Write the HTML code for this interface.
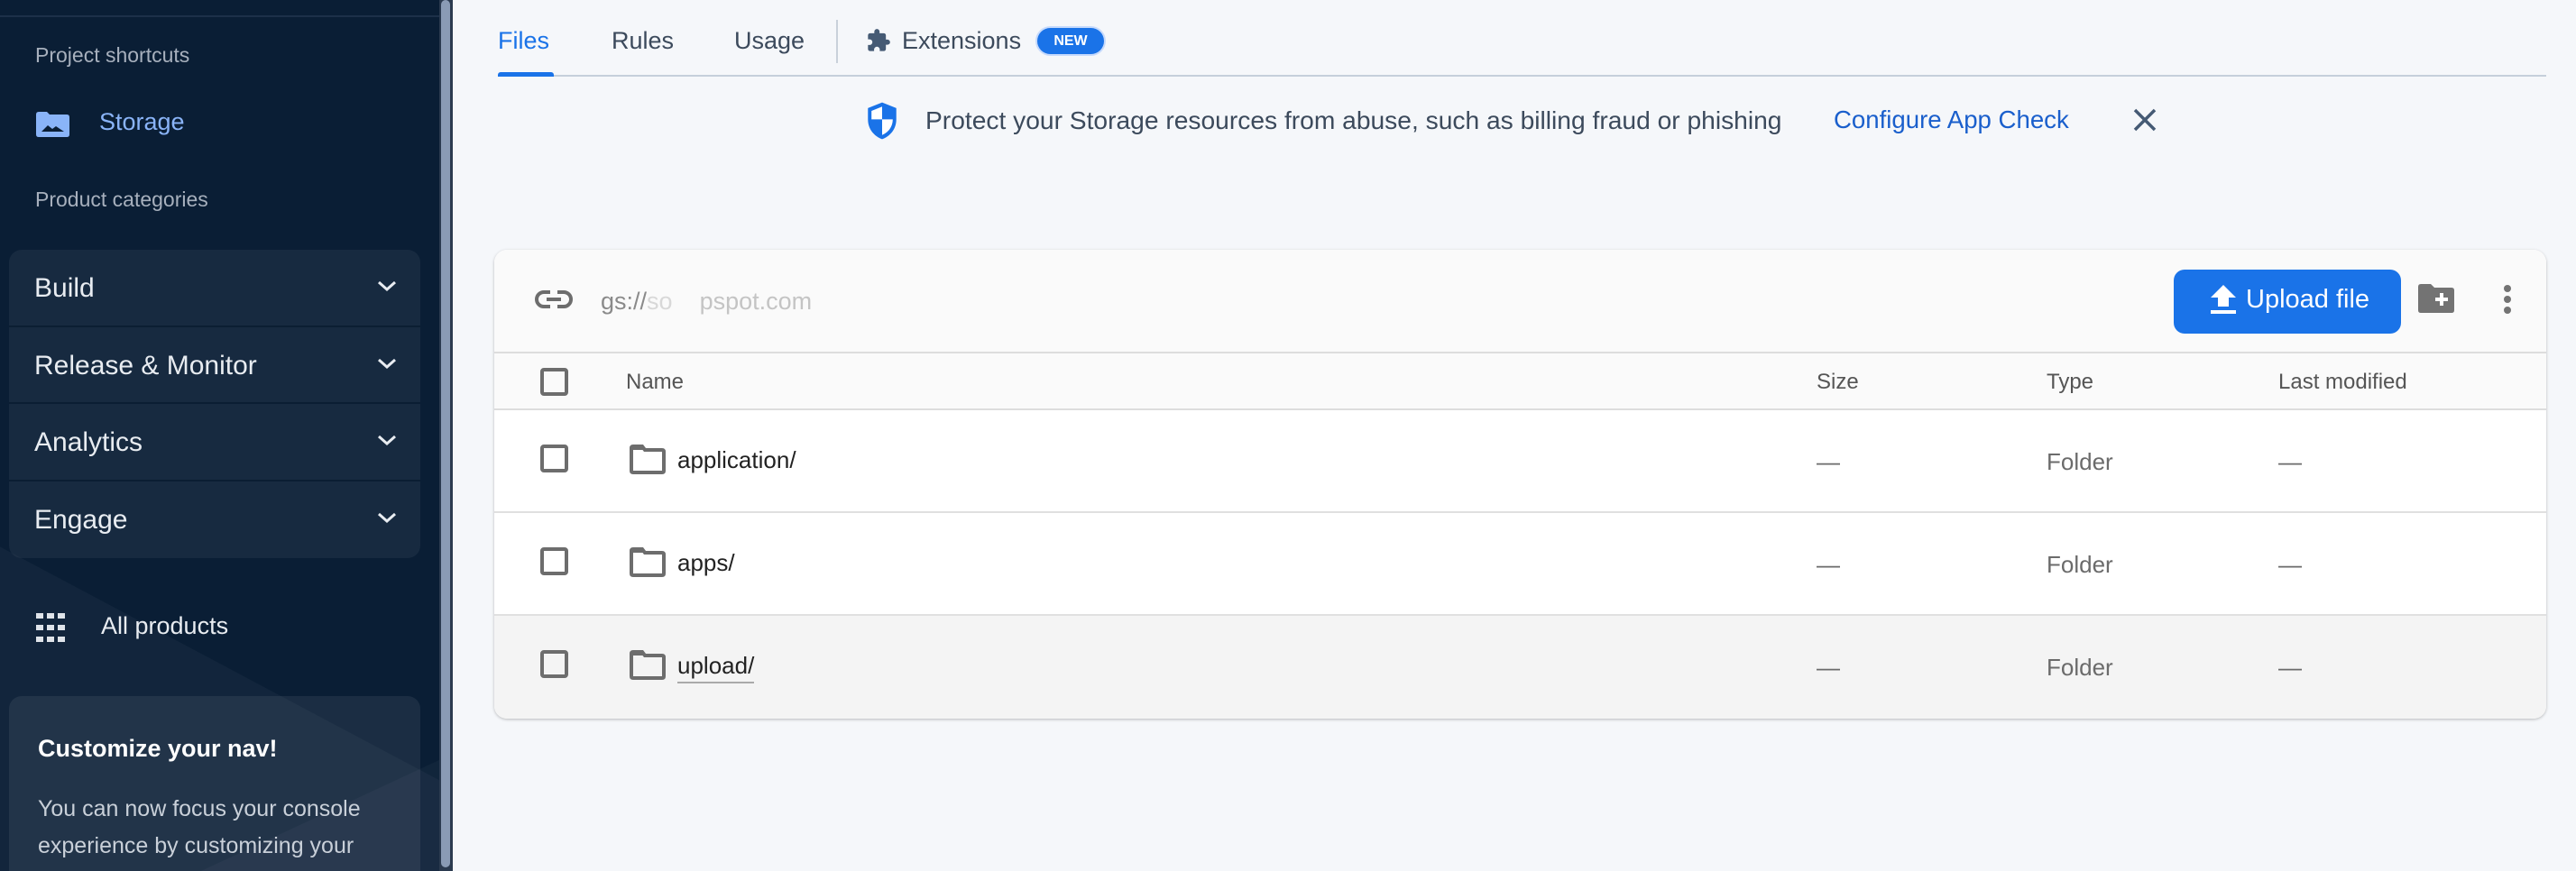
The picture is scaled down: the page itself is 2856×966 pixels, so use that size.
<!DOCTYPE html>
<html><head><meta charset="utf-8"><style>
*{margin:0;padding:0;box-sizing:border-box}
html,body{width:2856px;height:966px;overflow:hidden}
body{background:#f5f7fa;font-family:"Liberation Sans",Arial,sans-serif;position:relative}
.sb{position:absolute;left:0;top:0;width:487px;height:966px;background:#0a1e35;overflow:hidden}
.sb .shape1{position:absolute;left:-200px;top:500px;width:1400px;height:600px;background:rgba(255,255,255,0.035);transform:rotate(28deg);transform-origin:0 0}
.sb .shape2{position:absolute;left:150px;top:1000px;width:800px;height:800px;background:rgba(255,255,255,0.03);transform:rotate(-25deg);transform-origin:0 0}
.scroll{position:absolute;left:487px;top:0;width:15px;height:966px;background:#2b3a4f}
.scroll i{position:absolute;left:2px;top:0;width:10px;height:962px;background:#8a9bb5;border-radius:5px}
.t{position:absolute;white-space:nowrap}
.acc{position:absolute;left:10px;top:277px;width:456px;height:342px;border-radius:14px;background:rgba(255,255,255,0.055);overflow:hidden}
.acc div{height:85.5px;border-bottom:2px solid #0b1e33;position:relative;color:#e8ecf1;font-size:30px;padding-left:28px;line-height:85px}
.acc div:last-child{border-bottom:none}
.acc svg{position:absolute;right:26px;top:34px}
.card2{position:absolute;left:10px;top:772px;width:456px;height:194px;border-radius:14px 14px 0 0;background:rgba(255,255,255,0.07)}
.card{position:absolute;left:548px;top:277px;width:2275px;height:520px;border-radius:14px;background:#fff;box-shadow:0 1px 3px rgba(0,0,0,.25);overflow:hidden}
.hd{position:absolute;left:0;top:0;width:100%;height:115px;background:#fafafa;border-bottom:2px solid #ddd}
.th{position:absolute;left:0;top:115px;width:100%;height:63px;background:#fafafa;border-bottom:2px solid #ddd}
.row{position:absolute;left:0;width:100%;height:114px;border-bottom:2px solid #e0e0e0}
.cb{position:absolute;left:51px;width:31px;height:31px;border:4px solid #6d6d6d;border-radius:4px}
.gray{color:#555;font-size:24px}
.cell{position:absolute;top:42px;font-size:26px;color:#6b6b6b}
</style></head><body>
<div class="sb"><div class="shape1"></div><div class="shape2"></div>
<div style="position:absolute;left:0;top:17px;width:487px;height:2px;background:#1d3049"></div>
<div class="t" style="left:39px;top:48px;font-size:23px;color:#a7b0bd">Project shortcuts</div>
<svg style="position:absolute;left:40px;top:124px" width="37" height="28" viewBox="0 0 37 28"><path d="M0 3Q0 0 3 0H12L15 3H34Q37 3 37 6V25Q37 28 34 28H3Q0 28 0 25Z" fill="#8ab4f8"/><path d="M6 22L13 15L18 19L22 16L31 22Z" fill="#0a1e35"/></svg>
<div class="t" style="left:110px;top:120px;font-size:27px;color:#8ab4f8">Storage</div>
<div class="t" style="left:39px;top:208px;font-size:23px;color:#a7b0bd">Product categories</div>
<div class="acc">
<div>Build<svg width="22" height="12" viewBox="0 0 22 12"><path d="M2 2L11 10L20 2" stroke="#e8ecf1" stroke-width="3" fill="none"/></svg></div>
<div>Release &amp; Monitor<svg width="22" height="12" viewBox="0 0 22 12"><path d="M2 2L11 10L20 2" stroke="#e8ecf1" stroke-width="3" fill="none"/></svg></div>
<div>Analytics<svg width="22" height="12" viewBox="0 0 22 12"><path d="M2 2L11 10L20 2" stroke="#e8ecf1" stroke-width="3" fill="none"/></svg></div>
<div>Engage<svg width="22" height="12" viewBox="0 0 22 12"><path d="M2 2L11 10L20 2" stroke="#e8ecf1" stroke-width="3" fill="none"/></svg></div>
</div>
<svg style="position:absolute;left:40px;top:680px" width="32" height="32" viewBox="0 0 32 32" fill="#dfe4ea"><rect x="0" y="0" width="8" height="6"/><rect x="12" y="0" width="8" height="6"/><rect x="24" y="0" width="8" height="6"/><rect x="0" y="13" width="8" height="6"/><rect x="12" y="13" width="8" height="6"/><rect x="24" y="13" width="8" height="6"/><rect x="0" y="26" width="8" height="6"/><rect x="12" y="26" width="8" height="6"/><rect x="24" y="26" width="8" height="6"/></svg>
<div class="t" style="left:112px;top:679px;font-size:27px;color:#e8ecf1">All products</div>
<div class="card2"></div>
<div class="t" style="left:42px;top:815px;font-size:27px;font-weight:bold;color:#fff">Customize your nav!</div>
<div class="t" style="left:42px;top:877px;font-size:25px;color:#c9d0d9;line-height:41px">You can now focus your console<br>experience by customizing your</div>
</div>
<div class="scroll"><i></i></div>

<div class="t" style="left:552px;top:30px;font-size:27px;color:#1a73e8">Files</div>
<div class="t" style="left:678px;top:30px;font-size:27px;color:#3c4a5c">Rules</div>
<div class="t" style="left:814px;top:30px;font-size:27px;color:#3c4a5c">Usage</div>
<div style="position:absolute;left:927px;top:22px;width:2px;height:48px;background:#c9d1da"></div>
<svg style="position:absolute;left:960px;top:31px" width="28" height="28" viewBox="0 0 24 24"><path fill="#455a74" d="M20.5 11H19V7a2 2 0 0 0-2-2h-4V3.5a2.5 2.5 0 0 0-5 0V5H4a2 2 0 0 0-2 2v3.8h1.5a2.7 2.7 0 0 1 0 5.4H2V20a2 2 0 0 0 2 2h3.8v-1.5a2.7 2.7 0 0 1 5.4 0V22H17a2 2 0 0 0 2-2v-4h1.5a2.5 2.5 0 0 0 0-5z"/></svg>
<div class="t" style="left:1000px;top:30px;font-size:27px;color:#3c4a5c">Extensions</div>
<div class="t" style="left:1150px;top:31px;width:74px;height:29px;border-radius:15px;background:#1a73e8;color:#fff;font-size:16px;font-weight:bold;text-align:center;line-height:29px;box-shadow:0 0 0 2px #c6dafc">NEW</div>
<div style="position:absolute;left:552px;top:83px;width:2271px;height:2px;background:#c5cfdb"></div>
<div style="position:absolute;left:552px;top:80px;width:62px;height:5px;background:#1a73e8;border-radius:3px 3px 0 0"></div>

<svg style="position:absolute;left:959px;top:112px" width="38" height="44" viewBox="0 0 24 28"><path d="M12 1L22 5V13C22 20 17.5 25 12 27C6.5 25 2 20 2 13V5Z" fill="#1a73e8"/><path d="M12 4L4.5 7V13H12ZM12 13V24C16 22.5 19.5 18.5 19.5 13Z" fill="#fff"/></svg>
<div class="t" style="left:1026px;top:117px;font-size:28.2px;color:#3c4a5c">Protect your Storage resources from abuse, such as billing fraud or phishing</div>
<div class="t" style="left:2033px;top:117px;font-size:27.6px;color:#1a5fcc">Configure App Check</div>
<svg style="position:absolute;left:2364px;top:119px" width="28" height="28" viewBox="0 0 28 28"><path d="M3 3L25 25M25 3L3 25" stroke="#455a74" stroke-width="3.5"/></svg>

<div class="card">
<div class="hd">
<svg style="position:absolute;left:45px;top:44px" width="42" height="22" viewBox="0 0 42 22"><path d="M17 3H10a8 8 0 0 0 0 16h7M25 3h7a8 8 0 0 1 0 16h-7M13 11h16" stroke="#6d6d6d" stroke-width="4" fill="none"/></svg>
<div class="t" style="left:118px;top:42px;font-size:27px;color:#8a8a8a">gs://<span style="color:#d8d8d8">so&nbsp;&nbsp;&nbsp;&nbsp;</span><span style="color:#c4c4c4">pspot.com</span></div>
<div style="position:absolute;left:1862px;top:22px;width:252px;height:71px;background:#1a73e8;border-radius:12px"></div>
<svg style="position:absolute;left:1902px;top:38px" width="30" height="34" viewBox="0 0 30 34"><path d="M15 1L29 15H21V25H9V15H1Z" fill="#fff"/><rect x="1" y="29" width="28" height="4" fill="#fff"/></svg>
<div class="t" style="left:1942px;top:39px;font-size:29px;color:#fff">Upload file</div>
<svg style="position:absolute;left:2133px;top:38px" width="40" height="32" viewBox="0 0 40 32"><path d="M0 3Q0 0 3 0H14L18 4H37Q40 4 40 7V29Q40 32 37 32H3Q0 32 0 29Z" fill="#737373"/><path d="M26 10V24M19 17H33" stroke="#fff" stroke-width="4"/></svg>
<svg style="position:absolute;left:2225px;top:38px" width="14" height="34" viewBox="0 0 14 34" fill="#737373"><circle cx="7" cy="5" r="4"/><circle cx="7" cy="17" r="4"/><circle cx="7" cy="29" r="4"/></svg>
</div>
<div class="th">
<div class="cb" style="top:16px"></div>
<div class="t gray" style="left:146px;top:18px">Name</div>
<div class="t gray" style="left:1466px;top:18px">Size</div>
<div class="t gray" style="left:1721px;top:18px">Type</div>
<div class="t gray" style="left:1978px;top:18px">Last modified</div>
</div>
<div class="row" style="top:178px">
<div class="cb" style="top:38px"></div>
<svg style="position:absolute;left:150px;top:38px" width="40" height="33" viewBox="0 0 40 33"><path d="M2 4Q2 2 4 2H14L17 6H36Q38 6 38 8V29Q38 31 36 31H4Q2 31 2 29Z" fill="none" stroke="#6d6d6d" stroke-width="4"/><path d="M2 4Q2 2 4 2H14L17 6H2Z" fill="#6d6d6d"/></svg>
<div class="t" style="left:203px;top:40px;font-size:26px;color:#222">application/</div>
<div class="cell" style="left:1466px">—</div><div class="cell" style="left:1721px">Folder</div><div class="cell" style="left:1978px">—</div>
</div>
<div class="row" style="top:292px">
<div class="cb" style="top:38px"></div>
<svg style="position:absolute;left:150px;top:38px" width="40" height="33" viewBox="0 0 40 33"><path d="M2 4Q2 2 4 2H14L17 6H36Q38 6 38 8V29Q38 31 36 31H4Q2 31 2 29Z" fill="none" stroke="#6d6d6d" stroke-width="4"/><path d="M2 4Q2 2 4 2H14L17 6H2Z" fill="#6d6d6d"/></svg>
<div class="t" style="left:203px;top:40px;font-size:26px;color:#222">apps/</div>
<div class="cell" style="left:1466px">—</div><div class="cell" style="left:1721px">Folder</div><div class="cell" style="left:1978px">—</div>
</div>
<div class="row" style="top:406px;background:#f4f4f4;border-bottom:none">
<div class="cb" style="top:38px"></div>
<svg style="position:absolute;left:150px;top:38px" width="40" height="33" viewBox="0 0 40 33"><path d="M2 4Q2 2 4 2H14L17 6H36Q38 6 38 8V29Q38 31 36 31H4Q2 31 2 29Z" fill="none" stroke="#6d6d6d" stroke-width="4"/><path d="M2 4Q2 2 4 2H14L17 6H2Z" fill="#6d6d6d"/></svg>
<div class="t" style="left:203px;top:40px;font-size:26px;color:#222;border-bottom:2px solid #aaa;padding-bottom:2px">upload/</div>
<div class="cell" style="left:1466px">—</div><div class="cell" style="left:1721px">Folder</div><div class="cell" style="left:1978px">—</div>
</div>
</div>
</body></html>
